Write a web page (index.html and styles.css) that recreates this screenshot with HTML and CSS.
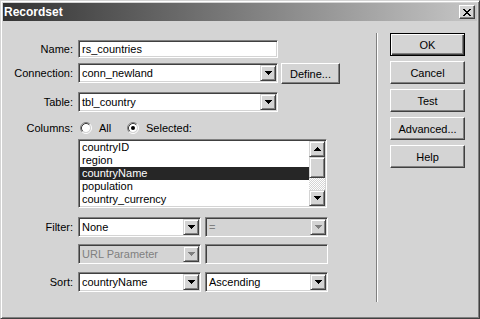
FILE: index.html
```html
<!DOCTYPE html>
<html lang="en">

<head>
    <meta charset="UTF-8">
    <title>Recordset</title>
    <link rel="stylesheet" href="styles.css">
</head>

<body>
    <div class="window">
        <div class="titlebar">
            <span class="title">Recordset</span>
            <span class="close">
                <svg width="8" height="7" viewBox="0 0 8 7"><path d="M0 0h2l2 2.5 2-2.5h2l-3 3.5 3 3.5h-2l-2-2.5-2 2.5h-2l3-3.5z" fill="#000"/></svg>
            </span>
        </div>
        <div class="body">
            <div class="form">
                <div class="row r-name">
                    <span class="lbl">Name:</span>
                    <div class="field w200">rs_countries</div>
                </div>
                <div class="row r-conn">
                    <span class="lbl">Connection:</span>
                    <div class="combo w200">
                        <span class="val">conn_newland</span>
                        <span class="drop"><svg width="7" height="4" viewBox="0 0 7 4"><path d="M0 0h7v1h-1v1h-1v1h-1v1h-1v-1h-1v-1h-1v-1h-1z"/></svg></span>
                    </div>
                    <span class="btn btn-define">Define...</span>
                </div>
                <div class="row r-table">
                    <span class="lbl">Table:</span>
                    <div class="combo w200">
                        <span class="val">tbl_country</span>
                        <span class="drop"><svg width="7" height="4" viewBox="0 0 7 4"><path d="M0 0h7v1h-1v1h-1v1h-1v1h-1v-1h-1v-1h-1v-1h-1z"/></svg></span>
                    </div>
                </div>
                <div class="row r-cols">
                    <span class="lbl">Columns:</span>
                    <span class="opt opt-all">
                        <svg width="12" height="12" viewBox="0 0 12 12">
                            <circle cx="6" cy="6" r="4" fill="#fff"/>
                            <path d="M2.11 9.89A5.5 5.5 0 0 1 9.89 2.11" fill="none" stroke="#808080"/>
                            <path d="M9.89 2.11A5.5 5.5 0 0 1 2.11 9.89" fill="none" stroke="#fff"/>
                            <path d="M2.82 9.18A4.5 4.5 0 0 1 9.18 2.82" fill="none" stroke="#404040"/>
                            <path d="M9.18 2.82A4.5 4.5 0 0 1 2.82 9.18" fill="none" stroke="#d4d4d4"/>
                        </svg>
                        All
                    </span>
                    <span class="opt">
                        <svg width="12" height="12" viewBox="0 0 12 12">
                            <circle cx="6" cy="6" r="4" fill="#fff"/>
                            <path d="M2.11 9.89A5.5 5.5 0 0 1 9.89 2.11" fill="none" stroke="#808080"/>
                            <path d="M9.89 2.11A5.5 5.5 0 0 1 2.11 9.89" fill="none" stroke="#fff"/>
                            <path d="M2.82 9.18A4.5 4.5 0 0 1 9.18 2.82" fill="none" stroke="#404040"/>
                            <path d="M9.18 2.82A4.5 4.5 0 0 1 2.82 9.18" fill="none" stroke="#d4d4d4"/>
                            <circle cx="6" cy="6" r="2" fill="#000"/>
                        </svg>
                        Selected:
                    </span>
                </div>
                <div class="row r-list">
                    <span class="lbl"></span>
                    <div class="listbox">
                        <ul class="items">
                            <li>countryID</li>
                            <li>region</li>
                            <li class="sel">countryName</li>
                            <li>population</li>
                            <li>country_currency</li>
                        </ul>
                        <div class="scrollbar">
                            <span class="sb-btn"><svg width="7" height="4" viewBox="0 0 7 4"><path d="M0 4h7v-1h-1v-1h-1v-1h-1v-1h-1v1h-1v1h-1v1h-1z"/></svg></span>
                            <span class="thumb"></span>
                            <span class="track"></span>
                            <span class="sb-btn"><svg width="7" height="4" viewBox="0 0 7 4"><path d="M0 0h7v1h-1v1h-1v1h-1v1h-1v-1h-1v-1h-1v-1h-1z"/></svg></span>
                        </div>
                    </div>
                </div>
                <div class="row r-filter">
                    <span class="lbl">Filter:</span>
                    <div class="combo w123">
                        <span class="val">None</span>
                        <span class="drop"><svg width="7" height="4" viewBox="0 0 7 4"><path d="M0 0h7v1h-1v1h-1v1h-1v1h-1v-1h-1v-1h-1v-1h-1z"/></svg></span>
                    </div>
                    <div class="combo w123 off second">
                        <span class="val">=</span>
                        <span class="drop"><svg width="7" height="4" viewBox="0 0 7 4"><path d="M0 0h7v1h-1v1h-1v1h-1v1h-1v-1h-1v-1h-1v-1h-1z"/></svg></span>
                    </div>
                </div>
                <div class="row r-url">
                    <span class="lbl"></span>
                    <div class="combo w123 off">
                        <span class="val">URL Parameter</span>
                        <span class="drop"><svg width="7" height="4" viewBox="0 0 7 4"><path d="M0 0h7v1h-1v1h-1v1h-1v1h-1v-1h-1v-1h-1v-1h-1z"/></svg></span>
                    </div>
                    <div class="field w123 off second"></div>
                </div>
                <div class="row r-sort">
                    <span class="lbl">Sort:</span>
                    <div class="combo w123">
                        <span class="val">countryName</span>
                        <span class="drop"><svg width="7" height="4" viewBox="0 0 7 4"><path d="M0 0h7v1h-1v1h-1v1h-1v1h-1v-1h-1v-1h-1v-1h-1z"/></svg></span>
                    </div>
                    <div class="combo w123 second">
                        <span class="val">Ascending</span>
                        <span class="drop"><svg width="7" height="4" viewBox="0 0 7 4"><path d="M0 0h7v1h-1v1h-1v1h-1v1h-1v-1h-1v-1h-1v-1h-1z"/></svg></span>
                    </div>
                </div>
            </div>
            <div class="sep"></div>
            <div class="actions">
                <span class="btn default">OK</span>
                <span class="btn">Cancel</span>
                <span class="btn">Test</span>
                <span class="btn">Advanced...</span>
                <span class="btn">Help</span>
            </div>
        </div>
    </div>
</body>

</html>
```

FILE: styles.css
```css
* {
    margin: 0;
    padding: 0;
    box-sizing: border-box;
}

body {
    width: 480px;
    height: 319px;
    overflow: hidden;
    background: #d4d4d4;
    font-family: "Liberation Sans", Arial, sans-serif;
    font-size: 11px;
    color: #000;
}

svg {
    display: block;
    shape-rendering: crispEdges;
}

.opt svg {
    shape-rendering: auto;
}

.window {
    width: 480px;
    height: 319px;
    display: flex;
    flex-direction: column;
    padding: 2px;
    border: 1px solid;
    border-color: #d4d4d4 #404040 #404040 #d4d4d4;
    box-shadow: inset 1px 1px #fff, inset -1px -1px #808080;
    background: #d4d4d4;
}

/* title bar */
.titlebar {
    height: 18px;
    display: flex;
    align-items: center;
    justify-content: space-between;
    padding: 0 2px 0 1px;
    background: linear-gradient(to right, #333333, #c6c6c6);
}

.title {
    color: #fff;
    font-weight: bold;
    font-size: 12px;
}

.close {
    width: 16px;
    height: 14px;
    display: flex;
    align-items: center;
    justify-content: center;
    background: #d4d4d4;
    border: 1px solid;
    border-color: #fff #404040 #404040 #fff;
    box-shadow: inset -1px -1px #808080;
}

/* main area */
.body {
    flex: 1;
    display: flex;
}

.form {
    width: 373px;
    padding-top: 19px;
    display: flex;
    flex-direction: column;
}

.row {
    display: flex;
    align-items: center;
}

.lbl {
    width: 70px;
    margin-right: 5px;
    text-align: right;
    white-space: nowrap;
}

.r-conn {
    margin-top: 5px;
    align-items: flex-start;
}

.r-conn .lbl {
    line-height: 20px;
}

.r-table {
    margin-top: 8px;
}

.r-cols {
    margin-top: 9px;
    height: 14px;
}

.r-list {
    margin-top: 4px;
}

.r-filter {
    margin-top: 9px;
}

.r-url {
    margin-top: 7px;
}

.r-sort {
    margin-top: 8px;
}

.w200 {
    width: 200px;
}

.w123 {
    width: 123px;
}

.second {
    margin-left: 4px;
}

/* sunken text field */
.field {
    height: 18px;
    line-height: 14px;
    padding: 1px 3px;
    background: #fff;
    border: 1px solid;
    border-color: #808080 #fff #fff #808080;
    box-shadow: inset 1px 1px #404040, inset -1px -1px #d4d4d4;
    white-space: nowrap;
}

.r-url .field {
    height: 20px;
}

/* drop-down list */
.combo {
    height: 20px;
    display: flex;
    align-items: center;
    justify-content: space-between;
    padding: 1px 1px 1px 3px;
    background: #fff;
    border: 1px solid;
    border-color: #808080 #fff #fff #808080;
    box-shadow: inset 1px 1px #404040, inset -1px -1px #d4d4d4;
}

.val {
    white-space: nowrap;
}

.drop,
.sb-btn {
    width: 16px;
    height: 16px;
    display: flex;
    align-items: center;
    justify-content: center;
    background: #d4d4d4;
    border: 1px solid;
    border-color: #d4d4d4 #404040 #404040 #d4d4d4;
    box-shadow: inset 1px 1px #fff, inset -1px -1px #808080;
}

.off {
    background: #d4d4d4;
    color: #808080;
}

.off .drop svg {
    fill: #808080;
}

/* radio options */
.opt {
    display: flex;
    align-items: center;
    gap: 7px;
}

.opt-all {
    width: 47px;
    margin-left: 2px;
}

/* list box */
.listbox {
    width: 249px;
    height: 69px;
    display: flex;
    padding: 1px;
    background: #fff;
    border: 1px solid;
    border-color: #808080 #fff #fff #808080;
    box-shadow: inset 1px 1px #404040, inset -1px -1px #d4d4d4;
}

.items {
    flex: 1;
    list-style: none;
    overflow: hidden;
}

.items li {
    height: 13px;
    line-height: 13px;
    padding-left: 2px;
    white-space: nowrap;
}

.items li.sel {
    background: #262626;
    color: #fff;
}

.scrollbar {
    width: 16px;
    display: flex;
    flex-direction: column;
}

.thumb {
    height: 21px;
    background: #d4d4d4;
    border: 1px solid;
    border-color: #d4d4d4 #404040 #404040 #d4d4d4;
    box-shadow: inset 1px 1px #fff, inset -1px -1px #808080;
}

.track {
    flex: 1;
    background: repeating-conic-gradient(#fff 0 25%, #d4d4d4 0 50%) 0 0 / 2px 2px;
}

/* buttons */
.btn {
    width: 75px;
    height: 23px;
    display: flex;
    align-items: center;
    justify-content: center;
    background: #d4d4d4;
    border: 1px solid;
    border-color: #fff #404040 #404040 #fff;
    box-shadow: inset -1px -1px #808080;
}

.btn.default {
    border-color: #000;
    box-shadow: inset 1px 1px #fff, inset -1px -1px #404040, inset -2px -2px #808080;
}

.btn-define {
    width: 59px;
    height: 21px;
    margin-left: 3px;
}

.sep {
    width: 2px;
    margin: 12px 0 14px;
    border-left: 1px solid #808080;
    border-right: 1px solid #fff;
}

.actions {
    margin-left: 12px;
    padding-top: 12px;
    display: flex;
    flex-direction: column;
    gap: 5px;
}
```
